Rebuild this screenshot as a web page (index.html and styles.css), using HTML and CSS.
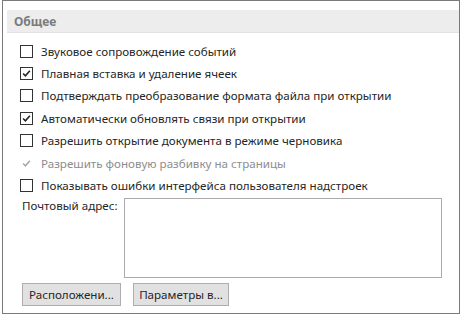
FILE: index.html
```html
<!DOCTYPE html>
<html lang="ru">
<head>
    <meta charset="UTF-8">
    <title>Общее</title>
    <link rel="stylesheet" href="styles.css">
</head>
<body>
    <div class="panel">
        <div class="section-title">Общее</div>
        <div class="options">
            <div class="option">
                <span class="box"></span>
                <span class="text">Звуковое сопровождение событий</span>
            </div>
            <div class="option">
                <span class="box checked"><svg viewBox="0 0 13 13"><path d="M2.5 6.5 L5.2 9.3 L10.5 3.2" /></svg></span>
                <span class="text">Плавная вставка и удаление ячеек</span>
            </div>
            <div class="option">
                <span class="box"></span>
                <span class="text">Подтверждать преобразование формата файла при открытии</span>
            </div>
            <div class="option">
                <span class="box checked"><svg viewBox="0 0 13 13"><path d="M2.5 6.5 L5.2 9.3 L10.5 3.2" /></svg></span>
                <span class="text">Автоматически обновлять связи при открытии</span>
            </div>
            <div class="option">
                <span class="box"></span>
                <span class="text">Разрешить открытие документа в режиме черновика</span>
            </div>
            <div class="option disabled">
                <span class="box checked"><svg viewBox="0 0 13 13"><path d="M2.5 6.5 L5.2 9.3 L10.5 3.2" /></svg></span>
                <span class="text">Разрешить фоновую разбивку на страницы</span>
            </div>
            <div class="option">
                <span class="box"></span>
                <span class="text">Показывать ошибки интерфейса пользователя надстроек</span>
            </div>
        </div>
        <div class="mail-row">
            <label for="mail">Почтовый адрес:</label>
            <textarea id="mail"></textarea>
        </div>
        <div class="buttons">
            <button class="button first">Расположени...</button>
            <button class="button second">Параметры в...</button>
        </div>
    </div>
</body>
</html>
```

FILE: styles.css
```css
body {
    margin: 0;
    font-family: "Noto Sans", "Open Sans", sans-serif;
    font-size: 11.6px;
    color: #262626;
    background: #fff;
}
.panel {
    margin-left: 2px;
    width: 456px;
    height: 312px;
    border: 1px solid #7a7a7a;
    background: #fff;
}
.section-title {
    margin: 9px 0 0 4px;
    height: 23px;
    line-height: 23px;
    padding-left: 7px;
    background: #ededed;
    border-bottom: 1px solid #e2e2e2;
    box-sizing: border-box;
    font-weight: bold;
    font-size: 12px;
    color: #7b7b7b;
}
.options {
    padding: 7px 0 0 17px;
}
.option {
    display: flex;
    align-items: center;
    height: 22.4px;
}
.box {
    width: 13px;
    height: 13px;
    box-sizing: border-box;
    border: 1px solid #333;
    background: #fff;
    margin-right: 8px;
    display: flex;
}
.box svg {
    width: 11px;
    height: 11px;
}
.box path {
    fill: none;
    stroke: #222;
    stroke-width: 1.8;
}
.option.disabled {
    color: #8d8d8d;
}
.option.disabled .box {
    border-color: #fff;
}
.option.disabled .box path {
    stroke: #a8a8a8;
}
.mail-row {
    display: flex;
    margin: 0 0 0 19px;
    padding-top: 1px;
}
.mail-row label {
    width: 102px;
    padding-top: 0;
}
.mail-row textarea {
    width: 318px;
    height: 80px;
    box-sizing: border-box;
    border: 1px solid #ababab;
    resize: none;
    margin: 0;
}
.buttons {
    display: flex;
    gap: 12px;
    margin: 5px 0 0 19px;
}
.button {
    height: 23px;
    padding: 0;
    font-family: inherit;
    font-size: 11.6px;
    color: #262626;
    background: #e1e1e1;
    border: 1px solid #adadad;
    border-radius: 0;
}
.button.first {
    width: 99px;
}
.button.second {
    width: 96px;
}
```
